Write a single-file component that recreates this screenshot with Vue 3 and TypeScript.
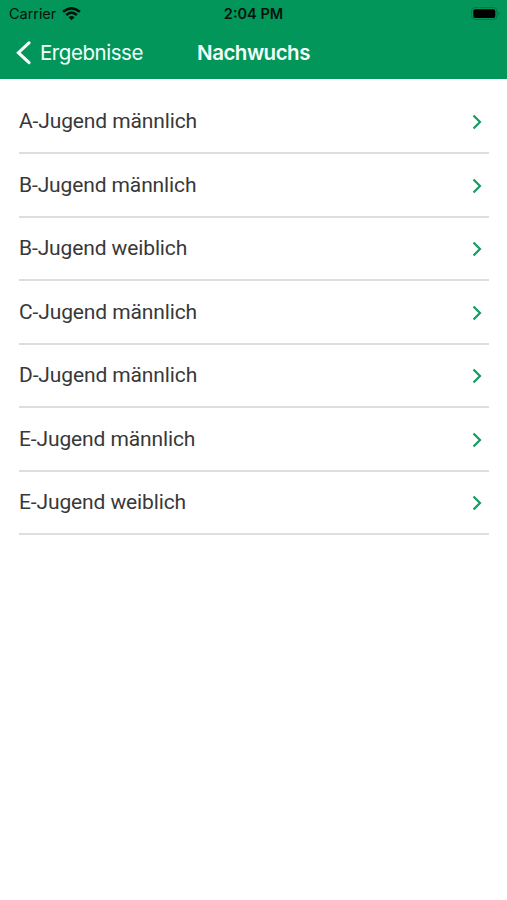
<script setup lang="ts">
const teams: string[] = [
  'A-Jugend männlich',
  'B-Jugend männlich',
  'B-Jugend weiblich',
  'C-Jugend männlich',
  'D-Jugend männlich',
  'E-Jugend männlich',
  'E-Jugend weiblich',
]
</script>

<template>
  <div class="screen">
    <header class="top">
      <div class="status">
        <div class="carrier">
          <span>Carrier</span>
          <svg width="19" height="14" viewBox="0 0 19 14">
            <path d="M9.5 13.2 6.5 10.2Q9.5 7.9 12.5 10.2Z" fill="#03140b" />
            <path d="M4.2 8Q9.5 3.4 14.8 8M1.1 4.8Q9.5 -2.2 17.9 4.8" fill="none" stroke="#03140b" stroke-width="2.6" />
          </svg>
        </div>
        <span class="time">2:04 PM</span>
        <svg class="battery" width="30" height="14" viewBox="0 0 30 14">
          <rect x="0.5" y="0.5" width="25.5" height="12" rx="3.6" fill="none" stroke="#07713f" />
          <rect x="2.3" y="2.2" width="22" height="8.8" rx="2" fill="#000" />
          <path d="M27.5 4.5Q29.5 6.5 27.5 8.5Z" fill="#07713f" />
        </svg>
      </div>
      <nav class="bar">
        <div class="back">
          <svg width="16" height="26" viewBox="0 0 16 26">
            <path d="M14 2.8 3.4 12.7 14 22.6" fill="none" stroke="#f4fffa" stroke-width="3.1" stroke-linecap="round" />
          </svg>
          <span>Ergebnisse</span>
        </div>
        <h1>Nachwuchs</h1>
        <span></span>
      </nav>
    </header>
    <ul class="list">
      <li v-for="team in teams" :key="team">
        <span>{{ team }}</span>
        <svg class="chevron" width="10" height="16" viewBox="0 0 10 16">
          <path d="M1.5 1.5 8 8 1.5 14.5" fill="none" stroke="#159a65" stroke-width="2.2" />
        </svg>
      </li>
    </ul>
  </div>
</template>

<style>
body {
  background: #fff;
}
</style>

<style scoped>
.screen {
  width: 507px;
  height: 900px;
  background: #fff;
  overflow: hidden;
}
.top {
  height: 79px;
  background: #02965b;
}
.status {
  height: 27px;
  display: grid;
  grid-template-columns: 1fr auto 1fr;
  align-items: center;
  padding: 0 6px 0 9px;
  font: 14.5px/27px Inter, sans-serif;
  color: #03140b;
}
.carrier {
  display: flex;
  align-items: center;
  gap: 5.5px;
  letter-spacing: -0.05px;
}
.time {
  font-weight: 600;
  margin-left: -3px;
}
.battery {
  justify-self: end;
}
.bar {
  height: 52px;
  display: grid;
  grid-template-columns: 1fr auto 1fr;
  align-items: center;
  padding: 0 15px;
  color: #f4fffa;
  font: 20.5px/52px Inter, sans-serif;
}
.back {
  display: flex;
  align-items: center;
  gap: 9px;
  letter-spacing: -0.45px;
}
h1 {
  margin: 0;
  font-size: 20.5px;
  font-weight: 600;
  letter-spacing: -0.5px;
}
.list {
  margin: 0;
  padding: 11.6px 18px 0 19px;
  list-style: none;
  font: 21px/24px Roboto, sans-serif;
  letter-spacing: -0.12px;
  color: #383838;
}
li {
  height: 63.5px;
  box-sizing: border-box;
  display: flex;
  justify-content: space-between;
  align-items: center;
  padding-right: 7px;
  border-bottom: 2px solid #dedede;
}
.chevron {
  margin-top: 2px;
}
</style>
